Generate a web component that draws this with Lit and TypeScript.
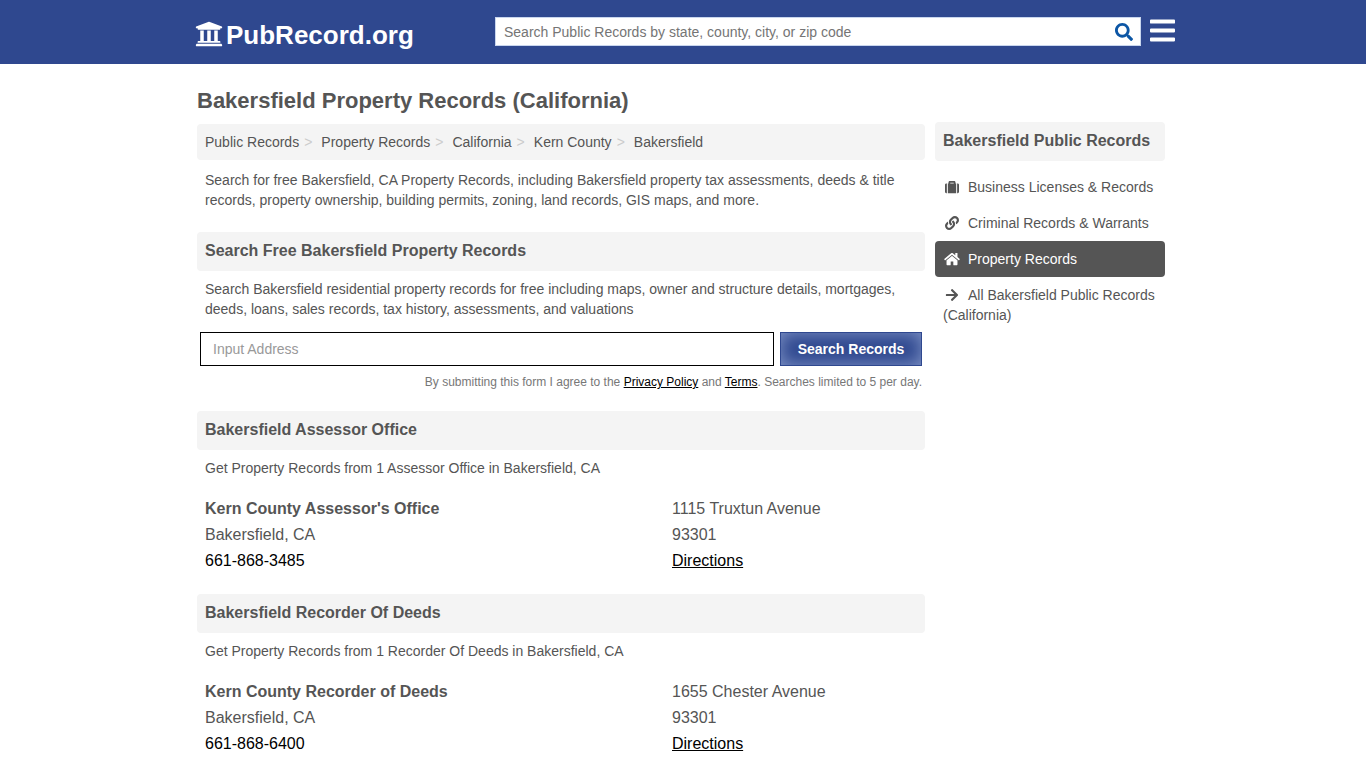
import { LitElement, html, css, svg } from "lit";
import { customElement } from "lit/decorators.js";
import { classMap } from "lit/directives/class-map.js";

interface Glyph {
  width: number;
  path: string;
}

const glyphs: Record<string, Glyph> = {
  university: {
    width: 512,
    path: "M496 128v16a8 8 0 0 1-8 8h-24v12c0 6.627-5.373 12-12 12H60c-6.627 0-12-5.373-12-12v-12H24a8 8 0 0 1-8-8v-16a8 8 0 0 1 4.941-7.392l232-88a7.996 7.996 0 0 1 6.118 0l232 88A8 8 0 0 1 496 128zm-24 304H40c-13.255 0-24 10.745-24 24v16a8 8 0 0 0 8 8h464a8 8 0 0 0 8-8v-16c0-13.255-10.745-24-24-24zM96 192v192H60c-6.627 0-12 5.373-12 12v20h416v-20c0-6.627-5.373-12-12-12h-36V192h-64v192h-64V192h-64v192h-64V192H96z",
  },
  search: {
    width: 512,
    path: "M505 442.7L405.3 343c-4.5-4.5-10.6-7-17-7H372c27.6-35.3 44-79.7 44-128C416 93.1 322.9 0 208 0S0 93.1 0 208s93.1 208 208 208c48.3 0 92.7-16.4 128-44v16.3c0 6.4 2.5 12.5 7 17l99.7 99.7c9.4 9.4 24.6 9.4 33.9 0l28.3-28.3c9.4-9.4 9.4-24.6.1-34zM208 336c-70.7 0-128-57.2-128-128 0-70.7 57.2-128 128-128 70.7 0 128 57.2 128 128 0 70.7-57.2 128-128 128z",
  },
  bars: {
    width: 448,
    path: "M16 132h416c8.837 0 16-7.163 16-16V76c0-8.837-7.163-16-16-16H16C7.163 60 0 67.163 0 76v40c0 8.837 7.163 16 16 16zm0 160h416c8.837 0 16-7.163 16-16v-40c0-8.837-7.163-16-16-16H16c-8.837 0-16 7.163-16 16v40c0 8.837 7.163 16 16 16zm0 160h416c8.837 0 16-7.163 16-16v-40c0-8.837-7.163-16-16-16H16c-8.837 0-16 7.163-16 16v40c0 8.837 7.163 16 16 16z",
  },
  suitcase: {
    width: 512,
    path: "M104 480h304V128h-24V80c0-26.51-21.49-48-48-48H176c-26.51 0-48 21.49-48 48v48h-24v352zm88-384h128v32H192V96zm320 80v256c0 26.51-21.49 48-48 48h-20V128h20c26.51 0 48 21.49 48 48zM68 480H48c-26.51 0-48-21.49-48-48V176c0-26.51 21.49-48 48-48h20v352z",
  },
  link: {
    width: 512,
    path: "M326.612 185.391c59.747 59.809 58.927 155.698.36 214.59-.11.12-.24.25-.36.37l-67.2 67.2c-59.27 59.27-155.699 59.262-214.96 0-59.27-59.26-59.27-155.7 0-214.96l37.106-37.106c9.84-9.84 26.786-3.3 27.294 10.606.648 17.722 3.826 35.527 9.69 52.721 1.986 5.822.567 12.262-3.783 16.612l-13.087 13.087c-28.026 28.026-28.905 73.66-1.155 101.96 28.024 28.579 74.086 28.749 102.325.51l67.2-67.19c28.191-28.191 28.073-73.757 0-101.83-3.701-3.694-7.429-6.564-10.341-8.569a16.037 16.037 0 0 1-6.947-12.606c-.396-10.567 3.348-21.456 11.698-29.806l21.054-21.055c5.521-5.521 14.182-6.199 20.584-1.731a152.482 152.482 0 0 1 20.522 17.197zM467.547 44.449c-59.261-59.262-155.69-59.27-214.96 0l-67.2 67.2c-.12.12-.25.25-.36.37-58.566 58.892-59.387 154.781.36 214.59a152.454 152.454 0 0 0 20.521 17.196c6.402 4.468 15.064 3.789 20.584-1.731l21.054-21.055c8.35-8.35 12.094-19.239 11.698-29.806a16.037 16.037 0 0 0-6.947-12.606c-2.912-2.005-6.64-4.875-10.341-8.569-28.073-28.073-28.191-73.639 0-101.83l67.2-67.19c28.239-28.239 74.3-28.069 102.325.51 27.75 28.3 26.872 73.934-1.155 101.96l-13.087 13.087c-4.35 4.35-5.769 10.79-3.783 16.612 5.864 17.194 9.042 34.999 9.69 52.721.509 13.906 17.454 20.446 27.294 10.606l37.106-37.106c59.271-59.259 59.271-155.699.001-214.959z",
  },
  home: {
    width: 576,
    path: "M488 312.7V456c0 13.3-10.7 24-24 24H348c-6.6 0-12-5.4-12-12V356c0-6.6-5.4-12-12-12h-72c-6.6 0-12 5.4-12 12v112c0 6.6-5.4 12-12 12H112c-13.3 0-24-10.7-24-24V312.7c0-3.6 1.6-7 4.4-9.3l188-154.8c4.4-3.6 10.8-3.6 15.3 0l188 154.8c2.7 2.3 4.3 5.7 4.3 9.3zm83.6-60.9L488 182.9V44.4c0-6.6-5.4-12-12-12h-56c-6.6 0-12 5.4-12 12V117l-89.5-73.7c-17.7-14.6-43.3-14.6-61 0L4.4 251.8c-5.1 4.2-5.8 11.8-1.6 16.9l25.5 31c4.2 5.1 11.8 5.8 16.9 1.6l235.2-193.7c4.4-3.6 10.8-3.6 15.3 0l235.2 193.7c5.1 4.2 12.7 3.5 16.9-1.6l25.5-31c4.2-5.2 3.4-12.7-1.7-16.9z",
  },
  arrow: {
    width: 448,
    path: "M190.5 66.9l22.2-22.2c9.4-9.4 24.6-9.4 33.9 0L441 239c9.4 9.4 9.4 24.6 0 33.9L246.6 467.3c-9.4 9.4-24.6 9.4-33.9 0l-22.2-22.2c-9.5-9.5-9.3-25 .4-34.3L311.4 296H24c-13.3 0-24-10.7-24-24v-32c0-13.3 10.7-24 24-24h287.4L190.9 101.2c-9.8-9.3-10-24.8-.4-34.3z",
  },
};

const icon = (name: string, cls: string) => {
  const g = glyphs[name];
  return html`<svg class=${cls} viewBox="0 0 ${g.width} 512" fill="currentColor" aria-hidden="true">
    ${svg`<path d=${g.path}></path>`}
  </svg>`;
};

const crumbs = ["Public Records", "Property Records", "California", "Kern County", "Bakersfield"];

const categories = [
  { icon: "suitcase", label: "Business Licenses & Records" },
  { icon: "link", label: "Criminal Records & Warrants" },
  { icon: "home", label: "Property Records", active: true },
  { icon: "arrow", label: "All Bakersfield Public Records (California)" },
];

const offices = [
  {
    heading: "Bakersfield Assessor Office",
    intro: "Get Property Records from 1 Assessor Office in Bakersfield, CA",
    name: "Kern County Assessor's Office",
    phone: "661-868-3485",
    street: "1115 Truxtun Avenue",
  },
  {
    heading: "Bakersfield Recorder Of Deeds",
    intro: "Get Property Records from 1 Recorder Of Deeds in Bakersfield, CA",
    name: "Kern County Recorder of Deeds",
    phone: "661-868-6400",
    street: "1655 Chester Avenue",
  },
];

@customElement("app-root")
export class AppRoot extends LitElement {
  static styles = css`
    :host {
      display: block;
      background: #fff;
      color: #555;
      font: 14px/20px "Liberation Sans", Arial, sans-serif;
    }
    * {
      box-sizing: border-box;
    }
    h1, h2, p, ol, ul {
      margin: 0;
      padding: 0;
      list-style: none;
    }
    a {
      color: inherit;
      text-decoration: none;
    }
    input, button {
      font: inherit;
      border-radius: 0;
      margin: 0;
    }
    .container {
      max-width: 984px;
      margin: 0 auto;
    }
    .top {
      background: #2f488f;
    }
    .bar {
      display: flex;
      align-items: center;
      height: 64px;
      padding-left: 4px;
    }
    .logo {
      display: flex;
      align-items: center;
      gap: 3px;
      width: 300px;
      padding-top: 5px;
      color: #fff;
      font-size: 26px;
      line-height: 32px;
      font-weight: bold;
    }
    .logo-icon {
      width: 28px;
      height: 28px;
      margin-bottom: 2px;
    }
    .site-search {
      display: flex;
      flex: 1;
      height: 29px;
      margin-bottom: 2px;
      background: #fff;
      border: 1px solid #c9d6ee;
    }
    .site-input {
      flex: 1;
      min-width: 0;
      padding: 2px 8px 0;
      border: 0;
      background: none;
      color: #555;
    }
    .site-input::placeholder {
      color: #757575;
    }
    .icon-button {
      display: flex;
      align-items: center;
      padding: 0;
      border: 0;
      background: none;
    }
    .go {
      padding: 2px 7px 0;
      color: #0c56a5;
    }
    .go-icon {
      width: 18px;
      height: 18px;
    }
    .menu {
      margin-left: 9px;
      color: #fff;
    }
    .menu-icon {
      width: 25px;
      height: 29px;
      margin-bottom: 4px;
    }
    .page {
      padding: 24px 10px 0 6px;
    }
    .title {
      font-size: 22px;
      line-height: 26px;
    }
    .columns {
      display: grid;
      grid-template-columns: minmax(0, 1fr) 230px;
      gap: 10px;
      align-items: start;
    }
    .main {
      padding-top: 10px;
    }
    .side {
      padding-top: 8px;
    }
    .crumbs {
      display: flex;
      padding: 8px;
      border-radius: 4px;
      background: #f4f4f4;
    }
    .crumb + .crumb::before {
      content: ">";
      padding: 0 9px 0 5px;
      color: #ccc;
    }
    .text {
      padding: 8px 8px 0;
    }
    .intro {
      padding: 10px 8px 2px;
    }
    .section {
      margin-top: 20px;
    }
    .heading {
      padding: 9px 8px 10px;
      border-radius: 4px;
      background: #f4f4f4;
      font-size: 16px;
      line-height: 20px;
    }
    .lookup {
      display: flex;
      gap: 6px;
      padding: 13px 3px 0;
    }
    .address {
      flex: 1;
      min-width: 0;
      height: 34px;
      padding: 0 12px;
      border: 1px solid #000;
      background: #fff;
    }
    .address::placeholder {
      color: #999;
    }
    .submit {
      width: 142px;
      height: 34px;
      padding: 0;
      border: 1px solid #2f488f;
      background: #2f488f;
      box-shadow: inset 0 0 17px #8296c8;
      color: #fff;
      font-weight: bold;
    }
    .note {
      padding: 8px 3px 1px;
      color: #777;
      font-size: 12px;
      line-height: 16px;
      text-align: right;
    }
    .dark {
      color: #000;
    }
    .under {
      text-decoration: underline;
    }
    .office {
      display: grid;
      grid-template-columns: 467px 1fr;
      padding: 18px 8px 0;
      font-size: 16px;
      line-height: 26px;
    }
    .item {
      display: block;
      padding: 8px;
      border-radius: 4px;
    }
    .categories {
      padding-top: 8px;
    }
    .active {
      background: #555;
      color: #fff;
    }
    .item-icon {
      width: 18px;
      height: 14px;
      margin-right: 7px;
      vertical-align: -2px;
    }
  `;

  render() {
    return html`
      <header class="top">
        <div class="container bar">
          <a class="logo" href="#">${icon("university", "logo-icon")}<span>PubRecord.org</span></a>
          <form class="site-search" role="search">
            <input class="site-input" type="text" aria-label="Search Public Records"
              placeholder="Search Public Records by state, county, city, or zip code" />
            <button class="icon-button go" type="submit" aria-label="Search">${icon("search", "go-icon")}</button>
          </form>
          <button class="icon-button menu" type="button" aria-label="Menu">${icon("bars", "menu-icon")}</button>
        </div>
      </header>
      <div class="container page">
        <h1 class="title">Bakersfield Property Records (California)</h1>
        <div class="columns">
          <main class="main">
            <nav aria-label="Breadcrumb">
              <ol class="crumbs">
                ${crumbs.map((c) => html`<li class="crumb"><a href="#">${c}</a></li>`)}
              </ol>
            </nav>
            <p class="intro">
              Search for free Bakersfield, CA Property Records, including Bakersfield property tax
              assessments, deeds &amp; title records, property ownership, building permits, zoning, land
              records, GIS maps, and more.
            </p>
            <section class="section">
              <h2 class="heading">Search Free Bakersfield Property Records</h2>
              <p class="text">
                Search Bakersfield residential property records for free including maps, owner and
                structure details, mortgages, deeds, loans, sales records, tax history, assessments, and
                valuations
              </p>
              <form class="lookup">
                <input class="address" type="text" aria-label="Address" placeholder="Input Address" />
                <button class="submit" type="submit">Search Records</button>
              </form>
              <p class="note">
                By submitting this form I agree to the <a class="dark under" href="#">Privacy Policy</a> and
                <a class="dark under" href="#">Terms</a>. Searches limited to 5 per day.
              </p>
            </section>
            ${offices.map(
              (o) => html`
                <section class="section">
                  <h2 class="heading">${o.heading}</h2>
                  <p class="text">${o.intro}</p>
                  <div class="office">
                    <div>
                      <div><strong>${o.name}</strong></div>
                      <div>Bakersfield, CA</div>
                      <div><a class="dark" href="#">${o.phone}</a></div>
                    </div>
                    <div>
                      <div>${o.street}</div>
                      <div>93301</div>
                      <div><a class="dark under" href="#">Directions</a></div>
                    </div>
                  </div>
                </section>
              `
            )}
          </main>
          <aside class="side">
            <h2 class="heading">Bakersfield Public Records</h2>
            <ul class="categories">
              ${categories.map(
                (c) => html`<li>
                  <a class=${classMap({ item: true, active: !!c.active })} href="#"
                    >${icon(c.icon, "item-icon")}${c.label}</a>
                </li>`
              )}
            </ul>
          </aside>
        </div>
      </div>
    `;
  }
}
